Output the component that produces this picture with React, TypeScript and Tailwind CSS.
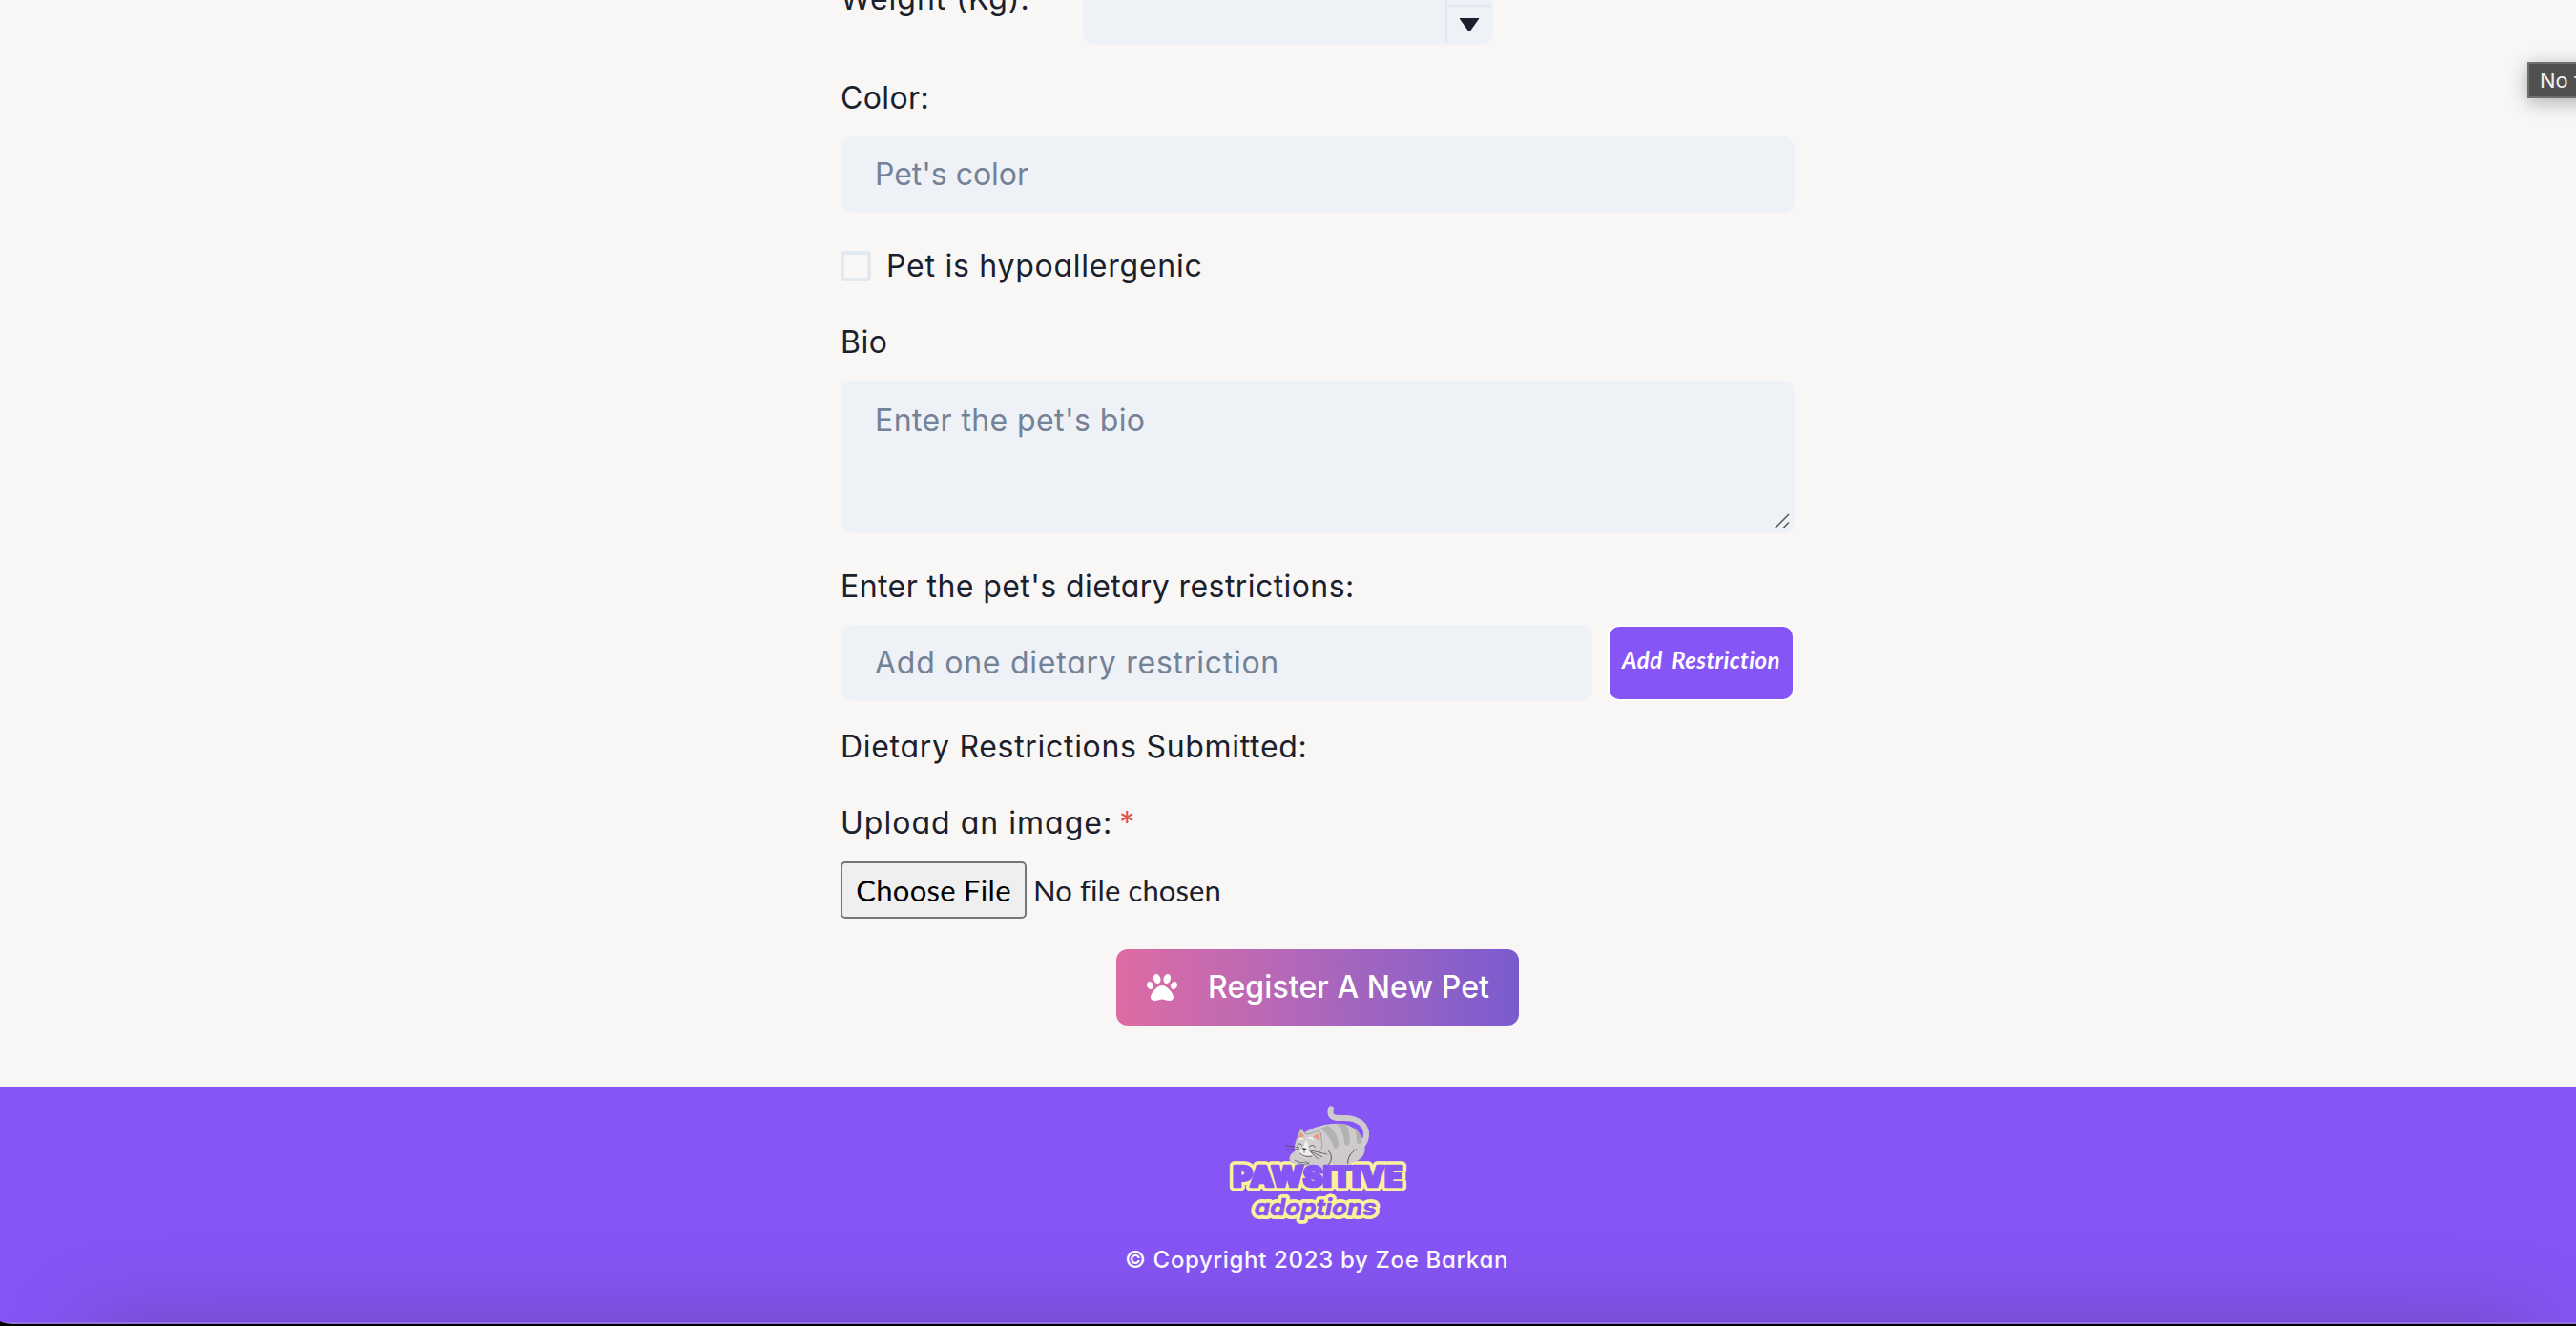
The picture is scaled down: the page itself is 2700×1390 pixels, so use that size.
import type { ReactNode } from "react";
import { FaPaw } from "react-icons/fa";

const fieldText =
  "font-['Inter',sans-serif] text-[32px] leading-[48px] [font-feature-settings:'cv11'_1]";

function Label({ children, className = "" }: { children: ReactNode; className?: string }) {
  return (
    <div className={`${fieldText} h-12 whitespace-nowrap text-[#1a202c] ${className}`}>
      {children}
    </div>
  );
}

function Field({ children, className = "", box = "h-20 pt-4" }: { children: ReactNode; className?: string; box?: string }) {
  return (
    <div className={`rounded-xl bg-[#eef1f6] pl-[36px] ${box}`}>
      <div className={`${fieldText} whitespace-nowrap text-[#748297] ${className}`}>{children}</div>
    </div>
  );
}

function Logo() {
  return (
    <svg width="220" height="160" viewBox="0 0 660 480" className="mt-px block">
      <g fontFamily="Inter, sans-serif" fontWeight="900" strokeLinejoin="round" stroke="#fbf19a" fill="#fbf19a">
        <text x="67" y="311" fontSize="90" strokeWidth="28" textLength="534" lengthAdjust="spacingAndGlyphs">PAWSITIVE</text>
        <text x="134" y="402" fontSize="72" strokeWidth="24" textLength="384" lengthAdjust="spacingAndGlyphs" fontStyle="italic" fontWeight="700">adoptions</text>
      </g>
      <g strokeLinecap="round" strokeLinejoin="round">
        {/* tail */}
        <path d="M375 67 C368 92 384 98 410 96 C462 93 488 120 486 150 C485 165 482 172 474 180" fill="none" stroke="#cfcbcd" strokeWidth="18" />
        {/* body */}
        <path d="M250 236 C238 220 248 206 270 196 L286 145 C325 120 370 110 410 114 C455 120 484 160 482 196 C480 220 460 234 430 240 L376 240 L340 254 L290 246 Z" fill="#cfcbcd" />
        <path d="M342 128 L366 120 C385 132 398 155 400 180 C396 192 390 194 385 190 C374 160 360 142 342 128 Z" fill="#b2b2b1" />
        <path d="M393 114 L420 115 C432 130 436 155 434 176 C428 184 421 184 417 176 C416 150 408 130 393 114 Z" fill="#b2b2b1" />
        <path d="M446 125 C462 135 472 152 473 172 C466 180 459 178 456 170 C456 150 452 136 446 125 Z" fill="#b2b2b1" />
        <path d="M364 196 C378 208 382 228 366 243 M455 194 C436 206 428 220 428 238" fill="none" stroke="#3b3b3d" strokeWidth="2.5" />
        {/* head */}
        <path d="M266 164 L278 133 Q282 130 287 136 L296 147 L313 145 L333 137 Q341 134 343 144 L347 180 C347 202 334 220 305 224 C278 224 258 206 260 186 Z" fill="#d3d0d2" />
        <path d="M266 164 L278 133 Q282 130 287 136 L296 147 L313 145 L333 137 Q341 134 343 144 L347 180 Q346 196 338 206" fill="none" stroke="#8d8a90" strokeWidth="2" />
        <path d="M274 160 L280 140 L290 153 Z M320 154 L338 143 L339 166 Z" fill="#e59a80" stroke="#e59a80" strokeWidth="2" />
        <path d="M296 165 C303 172 306 184 305 195 L318 210 L290 215 L276 202 L288 188 Z" fill="#f1efef" />
        <path d="M276 162 q6 -4 10 1 M306 160 q8 -4 12 3" fill="none" stroke="#f4f2f2" strokeWidth="5" />
        <path d="M270 180 Q278 172 285 182 M306 186 Q317 176 326 187" fill="none" stroke="#49474b" strokeWidth="2.5" />
        <path d="M284 190 L299 192 L291 199 Z" fill="#2c2b2d" />
        <path d="M291 199 v6 M278 208 Q297 222 315 217 M232 182 L274 188 M235 198 L275 192 M304 196 L362 210 M308 200 L347 218 M312 204 L337 226" fill="none" stroke="#4a484c" strokeWidth="2.2" />
        <path d="M262 229 Q282 240 298 233 L306 242 M272 239 Q292 246 306 236" fill="none" stroke="#4a484c" strokeWidth="2" />
      </g>
      <g fontFamily="Inter, sans-serif" fontWeight="900" strokeLinejoin="round" stroke="#8655f6" fill="#8655f6">
        <text x="67" y="311" fontSize="90" strokeWidth="8" textLength="534" lengthAdjust="spacingAndGlyphs">PAWSITIVE</text>
        <text x="134" y="402" fontSize="72" strokeWidth="2" textLength="384" lengthAdjust="spacingAndGlyphs" fontStyle="italic" fontWeight="700">adoptions</text>
      </g>
    </svg>
  );
}

export default function App() {
  return (
    <div className="relative flex h-[1390px] w-[2700px] flex-col overflow-hidden bg-[#f8f7f5]">
      <main className="ml-[881px] flex w-[1000px] flex-col">
        <div className="flex h-[47px]">
          <Label className="-mt-[25px] w-[254px] shrink-0 tracking-[1px]">Weight (Kg):</Label>
          <div className="flex h-[47px] w-[430px] justify-end rounded-b-xl bg-[#eef1f6] pr-[2px]">
            <div className="flex h-[45px] w-12 flex-col border-l-2 border-[#e2e8f0]">
              <div className="h-[7px] shrink-0 border-b-2 border-[#e2e8f0]" />
              <svg width="20" height="14" viewBox="0 0 20 14" className="ml-[13px] mt-3">
                <path d="M0 0H20V1L11 13.4Q10 14.4 9 13.4L0 1Z" fill="#1a202c" />
              </svg>
            </div>
          </div>
        </div>

        <Label className="mt-8 tracking-[0.4px]">Color:</Label>
        <div className="mt-4">
          <Field className="tracking-[-0.03px]">Pet&apos;s color</Field>
        </div>

        <div className="mt-8 flex items-center">
          <div className="size-8 rounded-[4px] border-4 border-[#e2e8f0]" />
          <Label className="ml-4 tracking-[0.75px]">Pet is hypoallergenic</Label>
        </div>

        <Label className="mt-8 tracking-[0.5px]">Bio</Label>
        <div className="relative mt-4">
          <Field box="h-40 pt-[18px]" className="tracking-[0.4px]">Enter the pet&apos;s bio</Field>
          <svg width="16" height="16" viewBox="0 0 16 16" className="absolute bottom-[5px] right-[5px]" stroke="#555" strokeWidth="1.5">
            <path d="M0.5 15.5L15 1M9 15.5L15 9.5" fill="none" />
          </svg>
        </div>

        <Label className="mt-8 tracking-[0.42px]">Enter the pet&apos;s dietary restrictions:</Label>
        <div className="mt-4 flex justify-between">
          <div className="w-[788px]">
            <Field className="tracking-[0.75px]">Add one dietary restriction</Field>
          </div>
          <button className="flex h-20 w-[196px] items-center justify-center rounded-xl border-2 border-white bg-[#8655f6] pb-1.5 font-['Lato',sans-serif] text-2xl font-bold italic tracking-[0.4px] text-white [word-spacing:4px]">
            Add Restriction
          </button>
        </div>

        <Label className="mt-6 tracking-[0.7px]">Dietary Restrictions Submitted:</Label>

        <Label className="mt-8 tracking-[1.02px]">
          Upload an image: <span className="-ml-[3px] text-[#e0504f]">*</span>
        </Label>
        <div className="mt-4 flex items-center font-['Lato',sans-serif] text-[31px]">
          <div className="flex h-[60px] w-[195px] items-center justify-center rounded-[5px] border-2 border-[#767676] bg-[#efefef] tracking-[0.28px] text-black">
            Choose File
          </div>
          <span className="ml-[7px] tracking-[0.11px] text-[#1a202c]">No file chosen</span>
        </div>

        <button className="mt-8 flex h-20 w-[422px] items-center self-center rounded-xl bg-linear-to-r from-[#df6ba3] to-[#7a5bcf] pl-8 font-['Inter',sans-serif] text-[32px] font-medium tracking-[0.1px] text-white">
          <FaPaw size={32} />
          <span className="ml-8 whitespace-nowrap">Register A New Pet</span>
        </button>
      </main>

      <footer className="relative mt-[64px] flex h-[247px] shrink-0 flex-col items-center overflow-hidden bg-[#8655f6] pl-[60px]">
        <Logo />
        <p className="relative mt-[3px] whitespace-nowrap font-['Inter',sans-serif] text-2xl font-medium leading-9 tracking-[0.67px] text-white [font-feature-settings:'cv11'_1]">
          © Copyright 2023 by Zoe Barkan
        </p>
        <div className="absolute -bottom-[60px] left-[90px] right-[40px] h-[60px] rounded-[40px] shadow-[0_4px_86px_4px_rgba(75,60,105,0.46)]" />
      </footer>
      <div className="h-[2px] shrink-0 bg-[#9274d8]" />
      <div className="h-[2px] shrink-0 bg-black" />
      <svg width="12" height="4" viewBox="0 0 12 4" className="absolute bottom-[2px] left-0">
        <path d="M0 1Q3 3 12 4H0Z" fill="#000" />
      </svg>

      <div className="absolute left-[2649px] top-[65px] h-[38px] w-[120px] whitespace-nowrap border-2 border-[#6f6f6f] bg-[#505050] pl-[11px] font-['Inter',sans-serif] text-[22px] leading-[35px] text-[#f1f1f1] shadow-[0_4px_20px_rgba(0,0,0,0.3)]">
        No file chosen
      </div>
    </div>
  );
}
